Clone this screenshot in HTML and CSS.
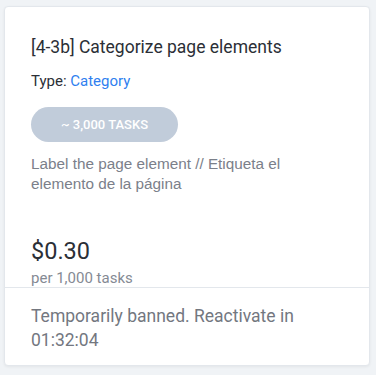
FILE: index.html
```html
<!DOCTYPE html>
<html>
<head>
<meta charset="utf-8">
<link rel="stylesheet" href="styles.css">
</head>
<body>
<div class="card">
  <div class="card-body">
    <h2 class="title">[4-3b] Categorize page elements</h2>
    <div class="type">Type: <span class="type-link">Category</span></div>
    <div class="pill">~ 3,000 TASKS</div>
    <p class="desc">Label the page element // Etiqueta el elemento de la página</p>
    <div class="price">$0.30</div>
    <div class="per">per 1,000 tasks</div>
  </div>
  <div class="card-footer">Temporarily banned. Reactivate in 01:32:04</div>
</div>
</body>
</html>
```
FILE: styles.css
```css
html, body {
  margin: 0;
  padding: 0;
  background: #f0f3f6;
}
body {
  padding: 6px 6px 9px 4px;
  font-family: Roboto, "Liberation Sans", sans-serif;
}
.card {
  background: #fff;
  border-radius: 4px;
  border: 1px solid #e3e7ec;
  box-shadow: 0 1px 3px rgba(0,0,0,0.06);
  width: 366px;
  box-sizing: border-box;
}
.card-body {
  padding: 28px 26px 0 26px;
  border-bottom: 1px solid #e3e7ec;
}
.title {
  margin: 0;
  font-size: 17.5px;
  font-weight: 400;
  line-height: 24px;
  color: #2b2f36;
}
.type {
  margin-top: 12px;
  font-size: 15px;
  line-height: 20px;
  color: #2b2f36;
}
.type-link {
  color: #2f7fef;
}
.pill {
  margin-top: 16px;
  width: 147px;
  height: 35px;
  border-radius: 18px;
  background: #c1ccda;
  color: #fff;
  font-size: 13px;
  font-weight: 500;
  display: flex;
  align-items: center;
  justify-content: center;
}
.desc {
  margin: 12px 0 0 0;
  font-family: "Liberation Sans", Arial, sans-serif;
  font-size: 15.3px;
  line-height: 20px;
  color: #7b808a;
  width: 262px;
}
.price {
  margin-top: 43px;
  font-size: 23.5px;
  line-height: 28px;
  color: #2b2f36;
}
.per {
  margin-top: 5px;
  font-size: 15px;
  line-height: 17px;
  color: #858a94;
  height: 17px;
  overflow: hidden;
}
.card-footer {
  padding: 16px 26px 13px 26px;
  font-size: 17.5px;
  line-height: 24px;
  color: #73777f;
}
```
